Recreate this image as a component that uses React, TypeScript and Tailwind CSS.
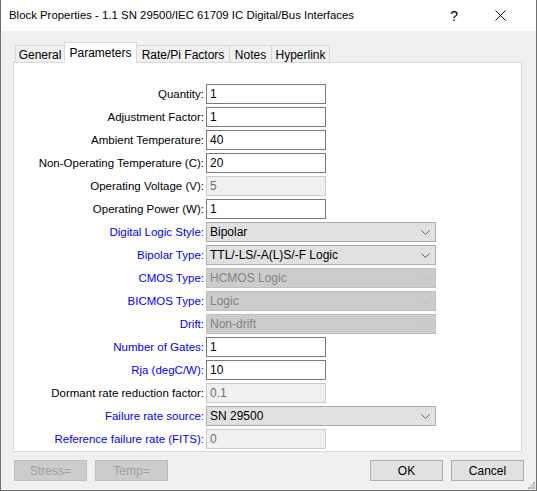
import React from "react";

type Kind = "input" | "input-off" | "select" | "select-off";

type Row = {
  label: string;
  value: string;
  kind: Kind;
  blue?: boolean;
};

const rows: Row[] = [
  { label: "Quantity:", value: "1", kind: "input" },
  { label: "Adjustment Factor:", value: "1", kind: "input" },
  { label: "Ambient Temperature:", value: "40", kind: "input" },
  { label: "Non-Operating Temperature (C):", value: "20", kind: "input" },
  { label: "Operating Voltage (V):", value: "5", kind: "input-off" },
  { label: "Operating Power (W):", value: "1", kind: "input" },
  { label: "Digital Logic Style:", value: "Bipolar", kind: "select", blue: true },
  { label: "Bipolar Type:", value: "TTL/-LS/-A(L)S/-F Logic", kind: "select", blue: true },
  { label: "CMOS Type:", value: "HCMOS Logic", kind: "select-off", blue: true },
  { label: "BICMOS Type:", value: "Logic", kind: "select-off", blue: true },
  { label: "Drift:", value: "Non-drift", kind: "select-off", blue: true },
  { label: "Number of Gates:", value: "1", kind: "input", blue: true },
  { label: "Rja (degC/W):", value: "10", kind: "input", blue: true },
  { label: "Dormant rate reduction factor:", value: "0.1", kind: "input-off" },
  { label: "Failure rate source:", value: "SN 29500", kind: "select", blue: true },
  { label: "Reference failure rate (FITS):", value: "0", kind: "input-off", blue: true },
];

const tabs = ["General", "Parameters", "Rate/Pi Factors", "Notes", "Hyperlink"];
const tabWidths = ["w-[49px]", "w-[73px]", "w-[93px]", "w-[42px]", "w-[58px]"];

function Chevron({ off }: { off?: boolean }) {
  return (
    <svg width="9" height="5" viewBox="0 0 9 5" className="shrink-0">
      <polyline
        points="0.5,0.5 4.5,4.5 8.5,0.5"
        fill="none"
        stroke={off ? "#bdbdbd" : "#606060"}
        strokeWidth="1"
      />
    </svg>
  );
}

function Field({ row }: { row: Row }) {
  if (row.kind === "input") {
    return (
      <div className="flex h-[20px] w-[120px] items-center border border-[#7a7a7a] bg-white pl-[3px] text-black">
        {row.value}
      </div>
    );
  }
  if (row.kind === "input-off") {
    return (
      <div className="flex h-[20px] w-[120px] items-center border border-[#cccccc] bg-[#f0f0f0] pl-[3px] text-[#6d6d6d]">
        {row.value}
      </div>
    );
  }
  const off = row.kind === "select-off";
  return (
    <div
      className={
        off
          ? "flex h-[20px] w-[230px] items-center justify-between border border-[#bfbfbf] bg-[#cccccc] pl-[3px] pr-[5px] text-[#838383]"
          : "flex h-[20px] w-[230px] items-center justify-between border border-[#adadad] bg-[#e1e1e1] pl-[3px] pr-[5px] text-black"
      }
    >
      <span>{row.value}</span>
      <Chevron off={off} />
    </div>
  );
}

export default function App() {
  return (
    <div
      className="flex h-[491px] w-[537px] flex-col border-x border-b border-[#6e6e6e] bg-[#f0f0f0] text-[11.5px] leading-none"
      style={{ fontFamily: '"Liberation Sans", Arial, sans-serif' }}
    >
      {/* title bar */}
      <div className="flex h-[31px] shrink-0 items-center bg-white">
        <span className="ml-[8px] text-[11.4px] text-black">
          Block Properties - 1.1 SN 29500/IEC 61709 IC Digital/Bus Interfaces
        </span>
        <span className="ml-auto mr-[37px] text-[14px] text-black">?</span>
        <svg width="11" height="11" viewBox="0 0 11 11" className="mr-[30px]">
          <path d="M0.5 0.5 L10.5 10.5 M10.5 0.5 L0.5 10.5" stroke="#111" strokeWidth="1" />
        </svg>
      </div>

      <div className="flex flex-col px-[12px] pt-[11px]">
        {/* tabs */}
        <div className="flex h-[20px] items-end pl-[2px]">
          {tabs.map((t, i) => {
            const active = i === 1;
            return (
              <div
                key={t}
                className={
                  active
                    ? `relative z-10 -mb-px flex h-[21px] ${tabWidths[i]} items-start justify-center border border-b-0 border-[#d9d9d9] bg-white pt-[4px] text-[12px] text-black`
                    : `flex h-[17px] ${tabWidths[i]} items-center justify-center border border-b-0 border-[#d9d9d9] bg-[#f0f0f0] pt-[2px] text-[12px] text-black ${i > 1 ? "border-l-0" : "border-r-0"}`
                }
              >
                {t}
              </div>
            );
          })}
        </div>

        {/* panel */}
        <div className="flex h-[390px] w-[509px] flex-col gap-[3px] border border-[#d9d9d9] bg-white pt-[21px]">
          {rows.map((r) => (
            <div key={r.label} className="flex h-[20px] items-center">
              <div
                className={`w-[190px] pt-[1px] text-right ${r.blue ? "text-[#0000ff]" : "text-black"}`}
              >
                {r.label}
              </div>
              <div className="ml-[2px] text-[12px]">
                <Field row={r} />
              </div>
            </div>
          ))}
        </div>

        {/* buttons */}
        <div className="mt-[8px] flex h-[21px] items-center gap-[8px] pl-[1px] text-[12px]">
          <div className="flex h-[21px] w-[73px] items-center justify-center border border-[#bfbfbf] bg-[#cccccc] text-[#a0a0a0]">
            Stress=
          </div>
          <div className="flex h-[21px] w-[73px] items-center justify-center border border-[#bfbfbf] bg-[#cccccc] text-[#a0a0a0]">
            Temp=
          </div>
          <div className="ml-auto flex h-[21px] w-[73px] items-center justify-center border border-[#adadad] bg-[#e1e1e1] text-black">
            OK
          </div>
          <div className="flex h-[21px] w-[73px] items-center justify-center border border-[#adadad] bg-[#e1e1e1] text-black">
            Cancel
          </div>
        </div>
      </div>

      {/* resize grip */}
      <div className="mt-auto flex justify-end pb-[1px] pr-[1px]">
        <svg width="7" height="7" viewBox="0 0 7 7">
          <rect x="5" y="0" width="2" height="2" fill="#b4b4b4" />
          <rect x="2.5" y="2.5" width="2" height="2" fill="#b4b4b4" />
          <rect x="5" y="2.5" width="2" height="2" fill="#b4b4b4" />
          <rect x="0" y="5" width="2" height="2" fill="#b4b4b4" />
          <rect x="2.5" y="5" width="2" height="2" fill="#b4b4b4" />
          <rect x="5" y="5" width="2" height="2" fill="#b4b4b4" />
        </svg>
      </div>
    </div>
  );
}
